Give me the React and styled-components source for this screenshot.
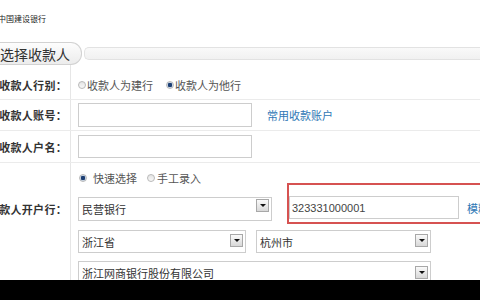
import React from "react"
import styled, { createGlobalStyle } from "styled-components"

const GlobalStyle = createGlobalStyle`
  html, body {
    margin: 0;
    padding: 0;
    background: #fff;
  }
  body {
    font-family: "Liberation Sans", "Noto Sans CJK SC", sans-serif;
    color: #333;
  }
`

const Page = styled.div`
  width: 480px;
  height: 300px;
  overflow: hidden;
  display: flex;
  flex-direction: column;
`

const Main = styled.div`
  height: 280px;
  overflow: hidden;
  flex-shrink: 0;
`

const Footer = styled.div`
  height: 20px;
  background: #000;
`

const Brand = styled.div`
  height: 42px;
  padding-top: 15px;
  box-sizing: border-box;
  margin-left: -2px;
  font-size: 8px;
  line-height: 9px;
  color: #222;
`

const TitleBar = styled.div`
  display: flex;
  align-items: center;
  height: 23px;
  gap: 2px;
`

const Tab = styled.div`
  height: 23px;
  box-sizing: border-box;
  width: 84px;
  margin-left: -2px;
  padding-left: 2px;
  display: flex;
  align-items: center;
  font-size: 14px;
  color: #333;
  border: 1px solid #d2d2d2;
  border-left: none;
  border-radius: 0 11px 11px 0;
  background: linear-gradient(#fdfdfd, #ececec);
`

const Strip = styled.div`
  flex: 1;
  height: 11px;
  border: 1px solid #e2e2e2;
  border-right: none;
  border-radius: 5px 0 0 5px;
  background: linear-gradient(#f9f9f9, #f1f1f1);
`

const Row = styled.div`
  display: flex;
  height: ${p => p.$h}px;
  border-bottom: 1px solid #ebebeb;
  box-sizing: border-box;
`

const Label = styled.div`
  width: 71px;
  flex-shrink: 0;
  box-sizing: border-box;
  border-right: 1px solid #e6e6e6;
  display: flex;
  justify-content: flex-end;
  align-items: ${p => (p.$top ? "flex-start" : "center")};
  padding-top: ${p => p.$top || p.$pt || 0}px;
  padding-right: 3px;

  span {
    flex-shrink: 0;
    white-space: nowrap;
    font-size: 11px;
    font-weight: bold;
    letter-spacing: 0.3px;
    color: #333;
  }
`

const Cell = styled.div`
  flex: 1;
  padding-left: 7px;
  display: flex;
  align-items: center;
  padding-top: ${p => p.$pt || 0}px;
  min-width: 0;
`

const Stack = styled.div`
  flex: 1;
  padding-left: 7px;
  display: flex;
  flex-direction: column;
`

const RadioLine = styled.div`
  height: 29px;
  display: flex;
  align-items: center;
  padding-left: 1px;
`

const Option = styled.label`
  display: flex;
  align-items: center;
  font-size: 11px;
  color: #555;
  margin-right: ${p => p.$mr || 0}px;
  white-space: nowrap;
`

const Dot = styled.span`
  width: 8px;
  height: 8px;
  box-sizing: border-box;
  border-radius: 50%;
  border: 1px solid #b9b9b9;
  margin-right: ${p => p.$gap || 1}px;
  background: ${p =>
    p.$on
      ? "radial-gradient(circle, #1d3f73 0 2px, #c9d6e6 2.5px)"
      : "linear-gradient(#e4e4e4, #f8f8f8)"};
`

const Input = styled.div`
  width: ${p => p.$w}px;
  height: ${p => p.$h || 24}px;
  box-sizing: border-box;
  border: 1px solid #cdcdcd;
  background: #fff;
  flex-shrink: 0;
  display: flex;
  align-items: center;
  padding-left: 2px;
  font-size: 11px;
  color: #444;
`

const Link = styled.a`
  font-size: 11px;
  color: #2f77b5;
  margin-left: ${p => p.$ml}px;
  white-space: nowrap;
  cursor: pointer;
`

const SelectRow = styled.div`
  display: flex;
  align-items: flex-start;
  gap: ${p => p.$gap || 0}px;
  margin-top: ${p => p.$mt}px;
`

const Select = styled.div`
  width: ${p => p.$w}px;
  height: ${p => p.$h || 24}px;
  box-sizing: border-box;
  border: 1px solid #cdcdcd;
  background: #fff;
  flex-shrink: 0;
  display: flex;
  justify-content: space-between;
  padding: 0 2px 0 3px;
  font-size: 11px;
  color: #333;

  & > span:first-child {
    align-self: center;
  }
`

const Arrow = styled.span`
  width: 13px;
  height: 13px;
  margin-top: ${p => p.$mt || 2}px;
  box-sizing: border-box;
  border: 1px solid #a8a8a8;
  background: linear-gradient(#fafafa, #d8d8d8);
  display: flex;
  align-items: center;
  justify-content: center;

  &::after {
    content: "";
    border-left: 3px solid transparent;
    border-right: 3px solid transparent;
    border-top: 3px solid #111;
  }
`

const Highlight = styled.div`
  display: flex;
  align-items: center;
  margin-top: -14px;
  padding: 11px 0 3px 0;
  border: 2px solid #d65251;
  border-right: none;
  flex-shrink: 0;
`

const DropDown = ({ w, h, text, arrowTop }) => (
  <Select $w={w} $h={h}>
    <span>{text}</span>
    <Arrow $mt={arrowTop} />
  </Select>
)

const App = () => {
  return (
    <Page>
      <GlobalStyle />
      <Main>
        <Brand>中国建设银行</Brand>
        <TitleBar>
          <Tab>选择收款人</Tab>
          <Strip />
        </TitleBar>

        <Row $h={35}>
          <Label $pt={5}>
            <span>收款人行别：</span>
          </Label>
          <Cell $pt={5}>
            <Option $mr={13}>
              <Dot />
              收款人为建行
            </Option>
            <Option>
              <Dot $on />
              收款人为他行
            </Option>
          </Cell>
        </Row>

        <Row $h={31}>
          <Label>
            <span>收款人账号：</span>
          </Label>
          <Cell>
            <Input $w={174} />
            <Link $ml={15}>常用收款账户</Link>
          </Cell>
        </Row>

        <Row $h={32}>
          <Label>
            <span>收款人户名：</span>
          </Label>
          <Cell>
            <Input $w={174} $h={23} />
          </Cell>
        </Row>

        <Row $h={160}>
          <Label $top={38}>
            <span>收款人开户行：</span>
          </Label>
          <Stack>
            <RadioLine>
              <Option $mr={10}>
                <Dot $on $gap={6} />
                快速选择
              </Option>
              <Option>
                <Dot $gap={2} />
                手工录入
              </Option>
            </RadioLine>
            <SelectRow $mt={5} $gap={15}>
              <DropDown w={194} text="民营银行" arrowTop={1} />
              <Highlight>
                <Input $w={170} $h={23}>323331000001</Input>
                <Link $ml={8}>模糊查询</Link>
              </Highlight>
            </SelectRow>
            <SelectRow $mt={6} $gap={10}>
              <DropDown w={168} h={23} text="浙江省" arrowTop={3} />
              <DropDown w={175} h={23} text="杭州市" arrowTop={3} />
            </SelectRow>
            <SelectRow $mt={8}>
              <DropDown w={353} h={24} text="浙江网商银行股份有限公司" arrowTop={4} />
            </SelectRow>
          </Stack>
        </Row>
      </Main>
      <Footer />
    </Page>
  )
}

export default App
